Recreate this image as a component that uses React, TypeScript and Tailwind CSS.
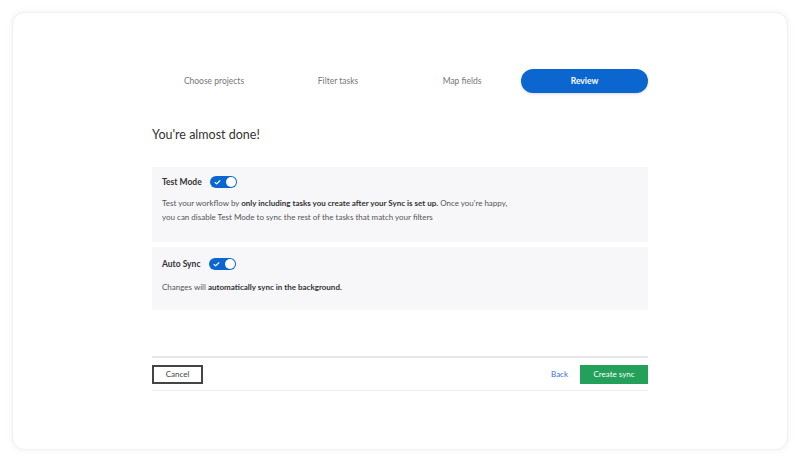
import { Check } from 'lucide-react';

const steps = ['Choose projects', 'Filter tasks', 'Map fields', 'Review'];

function Toggle() {
    return (
        <span className="inline-flex items-center justify-between w-[27px] h-[12px] rounded-full bg-[#0b66d0] pl-[4px] pr-[1px]">
            <Check className="w-[7px] h-[7px] text-white" strokeWidth={4} />
            <span className="w-[10px] h-[10px] rounded-full bg-white" />
        </span>
    );
}

export default function App() {
    return (
        <div className="w-[800px] h-[461px] bg-white p-3 font-['Lato','Liberation_Sans',sans-serif]">
            <div className="h-[438px] rounded-xl border border-[#f0eff4] shadow-[0_0_6px_rgba(0,0,0,0.06)] bg-white flex flex-col items-center pt-[56px]">
                <div className="w-[496px] flex flex-col">
                    <div className="grid grid-cols-4 h-[24px] items-center">
                        {steps.map((step, i) =>
                            i === steps.length - 1 ? (
                                <div key={step} className="h-[24px] -ml-[3px] rounded-full bg-[#0b66d0] shadow-[0_1px_3px_rgba(0,0,0,0.15)] flex items-center justify-center text-white text-[8.5px] font-bold">
                                    {step}
                                </div>
                            ) : (
                                <div key={step} className="text-center text-[8.5px] text-[#777]">{step}</div>
                            )
                        )}
                    </div>

                    <h1 className="mt-[33px] text-[12.5px] leading-[18px] text-[#333]">You're almost done!</h1>

                    <div className="mt-[23px] h-[75px] bg-[#f7f7f9] px-[10px] pt-[9px]">
                        <div className="flex items-center gap-[8px] h-[12px]">
                            <span className="text-[8.5px] font-bold text-[#333]">Test Mode</span>
                            <Toggle />
                        </div>
                        <p className="mt-[8px] text-[8px] leading-[14px] text-[#555]">
                            Test your workflow by <b className="text-[#333]">only including tasks you create after your Sync is set up.</b> Once you're happy,
                            <br />
                            you can disable Test Mode to sync the rest of the tasks that match your filters
                        </p>
                    </div>

                    <div className="mt-[5px] h-[63px] bg-[#f7f7f9] px-[10px] pt-[11px]">
                        <div className="flex items-center gap-[8px] h-[12px]">
                            <span className="text-[8.5px] font-bold text-[#333]">Auto Sync</span>
                            <Toggle />
                        </div>
                        <p className="mt-[10px] text-[8px] leading-[14px] text-[#555]">
                            Changes will <b className="text-[#333]">automatically sync in the background.</b>
                        </p>
                    </div>

                    <div className="mt-[46px] border-t-2 border-[#e7e6ec] border-b border-b-[#eeeef2] h-[35px] flex items-center justify-between">
                        <button className="w-[51px] h-[19px] border-2 border-[#444] text-[8px] text-[#444] bg-white">Cancel</button>
                        <div className="flex items-center gap-[12px]">
                            <span className="text-[8px] text-[#3b6fd0]">Back</span>
                            <button className="w-[68px] h-[19px] bg-[#23a05a] text-white text-[8px]">Create sync</button>
                        </div>
                    </div>
                </div>
            </div>
        </div>
    );
}
